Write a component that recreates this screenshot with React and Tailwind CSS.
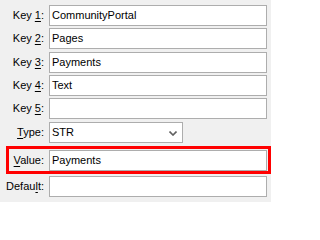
import React from "react";

const font = { fontFamily: '"Liberation Sans", Arial, sans-serif' };

function Label({ pre, u, post, className = "w-[49px]" }) {
  return (
    <div className={`${className} shrink-0 pr-[5px] text-right text-[11px] leading-none text-black`}>
      {pre}
      <span className="underline underline-offset-[2px]">{u}</span>
      {post}
    </div>
  );
}

function Box({ value }) {
  return (
    <div className="h-[21px] w-[218px] shrink-0 border border-[#adadad] bg-white pl-[2px] flex items-center text-[11px] text-black">
      {value}
    </div>
  );
}

function Row({ label, value, className }) {
  return (
    <div className={`flex items-center ${className}`}>
      <Label {...label} />
      <Box value={value} />
    </div>
  );
}

export default function App() {
  return (
    <div className="w-[271px] h-[202px] bg-[#f0f0f0] overflow-hidden" style={font}>
      <Row className="pt-[5px]" label={{ pre: "Key ", u: "1", post: ":" }} value="CommunityPortal" />
      <Row className="mt-[2px]" label={{ pre: "Key ", u: "2", post: ":" }} value="Pages" />
      <Row className="mt-[3px]" label={{ pre: "Key ", u: "3", post: ":" }} value="Payments" />
      <Row className="mt-[2px]" label={{ pre: "Key ", u: "4", post: ":" }} value="Text" />
      <Row className="mt-[2px]" label={{ pre: "Key ", u: "5", post: ":" }} value="" />

      {/* Type select */}
      <div className="flex items-center mt-[3px]">
        <Label pre="" u="T" post="ype:" />
        <div className="h-[21px] w-[134px] border border-[#adadad] bg-white pl-[2px] pr-[5px] flex items-center justify-between text-[11px] text-black">
          <span>STR</span>
          <svg width="8" height="5" viewBox="0 0 8 5" className="mt-[1px]">
            <path d="M0.5 0.5 L4 4 L7.5 0.5" fill="none" stroke="#606060" strokeWidth="1.6" />
          </svg>
        </div>
      </div>

      {/* Value row, highlighted */}
      <div className="mt-[3px] ml-[6px] w-[265px] border-[3px] border-[#ff0000] pt-[1px] flex items-center">
        <Label className="w-[40px]" pre="" u="V" post="alue:" />
        <Box value="Payments" />
      </div>

      <Row className="mt-[2px]" label={{ pre: "Defau", u: "l", post: "t:" }} value="" />
    </div>
  );
}
